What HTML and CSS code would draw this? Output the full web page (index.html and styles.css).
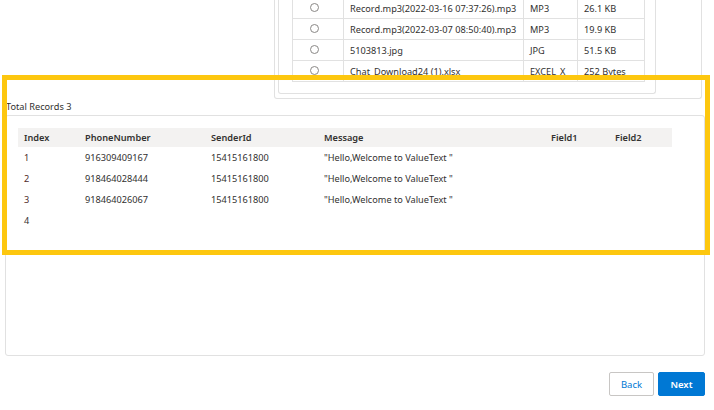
FILE: index.html
```html
<!DOCTYPE html>
<html lang="en">

<head>
    <meta charset="UTF-8">
    <meta name="viewport" content="width=device-width, initial-scale=1.0">
    <title>Upload Records</title>
    <link rel="stylesheet" href="styles.css">
</head>

<body>
    <div class="page">
        <div class="files-row">
            <div class="files-outer">
                <div class="files-inner">
                    <table class="files">
                        <colgroup>
                            <col class="f-radio">
                            <col class="f-name">
                            <col class="f-type">
                            <col class="f-size">
                        </colgroup>
                        <tr>
                            <td class="radio-cell"><span class="radio"></span></td>
                            <td>Record.mp3(2022-03-16 07:37:26).mp3</td>
                            <td>MP3</td>
                            <td>26.1 KB</td>
                        </tr>
                        <tr>
                            <td class="radio-cell"><span class="radio"></span></td>
                            <td>Record.mp3(2022-03-07 08:50:40).mp3</td>
                            <td>MP3</td>
                            <td>19.9 KB</td>
                        </tr>
                        <tr>
                            <td class="radio-cell"><span class="radio"></span></td>
                            <td>5103813.jpg</td>
                            <td>JPG</td>
                            <td>51.5 KB</td>
                        </tr>
                        <tr>
                            <td class="radio-cell"><span class="radio"></span></td>
                            <td>Chat_Download24 (1).xlsx</td>
                            <td>EXCEL_X</td>
                            <td>252 Bytes</td>
                        </tr>
                    </table>
                </div>
            </div>
        </div>

        <div class="total">Total Records 3</div>

        <div class="card">
            <table class="records">
                <thead>
                    <tr>
                        <th class="c-index">Index</th>
                        <th class="c-phone">PhoneNumber</th>
                        <th class="c-sender">SenderId</th>
                        <th class="c-msg">Message</th>
                        <th class="c-f1">Field1</th>
                        <th class="c-f2">Field2</th>
                    </tr>
                </thead>
                <tbody>
                    <tr>
                        <td class="idx">1</td>
                        <td>916309409167</td>
                        <td>15415161800</td>
                        <td>"Hello,Welcome to ValueText "</td>
                        <td></td>
                        <td></td>
                    </tr>
                    <tr>
                        <td class="idx">2</td>
                        <td>918464028444</td>
                        <td>15415161800</td>
                        <td>"Hello,Welcome to ValueText "</td>
                        <td></td>
                        <td></td>
                    </tr>
                    <tr>
                        <td class="idx">3</td>
                        <td>918464026067</td>
                        <td>15415161800</td>
                        <td>"Hello,Welcome to ValueText "</td>
                        <td></td>
                        <td></td>
                    </tr>
                    <tr>
                        <td>4</td>
                        <td></td>
                        <td></td>
                        <td></td>
                        <td></td>
                        <td></td>
                    </tr>
                </tbody>
            </table>
        </div>

        <div class="actions">
            <button class="btn btn-back">Back</button>
            <button class="btn btn-next">Next</button>
        </div>

        <!-- highlight frame drawn over the records area -->
        <div class="highlight"></div>
    </div>
</body>

</html>
```

FILE: styles.css
```css
* {
    margin: 0;
    padding: 0;
    box-sizing: border-box;
    font-family: 'Noto Sans', 'Open Sans', sans-serif;
}

body {
    background: white;
    color: #323130;
    font-size: 9.2px;
}

.page {
    position: relative;
    width: 714px;
    height: 410px;
    overflow: hidden;
}

/* File list panel (scrolled, top cut off) */

.files-row {
    display: flex;
    justify-content: flex-end;
    padding-right: 12px;
}

.files-outer {
    width: 428px;
    border: 1px solid #e1e1e1;
    border-top: none;
    border-radius: 0 0 3px 3px;
    padding: 0 45px 4px 3px;
}

.files-inner {
    border: 1px solid #e1e1e1;
    border-top: none;
    border-radius: 0 0 3px 3px;
    padding: 0 12px 11px 13px;
}

.files {
    width: 352px;
    border-collapse: collapse;
    table-layout: fixed;
    margin-top: -3px;
}

.f-radio { width: 51px; }
.f-name { width: 180px; }
.f-type { width: 54px; }
.f-size { width: 67px; }

.files td {
    border: 1px solid #e1e1e1;
    height: 21px;
    padding: 0 6px;
    white-space: nowrap;
    overflow: hidden;
}

.files .radio-cell {
    padding-left: 17px;
}

.radio {
    display: inline-block;
    width: 9px;
    height: 9px;
    border: 1px solid #8a8886;
    border-radius: 50%;
    vertical-align: middle;
    margin-top: -3px;
}

/* Records */

.total {
    padding: 1px 0 0 6px;
    height: 16px;
    line-height: 14px;
}

.card {
    margin: 0 9px 0 5px;
    height: 241px;
    border: 1px solid #e1e1e1;
    border-radius: 3px;
    padding: 12px 0 0 12px;
}

.records {
    width: 654px;
    border-collapse: collapse;
    table-layout: fixed;
}

.records th {
    background: #f3f2f1;
    height: 19px;
    text-align: left;
    font-weight: 600;
    padding: 0 6px;
    color: #323130;
}

.records td {
    height: 21px;
    padding: 0 6px;
    white-space: nowrap;
}

.records .idx {
    color: #4e2b2a;
}

.c-index { width: 61px; }
.c-phone { width: 126px; }
.c-sender { width: 113px; }
.c-msg { width: 227px; }
.c-f1 { width: 64px; }
.c-f2 { width: 63px; }

/* Buttons */

.actions {
    display: flex;
    justify-content: flex-end;
    gap: 4px;
    padding: 16px 9px 0 0;
}

.btn {
    height: 24px;
    border-radius: 2px;
    font-size: 9.5px;
    cursor: pointer;
}

.btn-back {
    width: 45px;
    background: white;
    border: 1px solid #c8c6c4;
    color: #0078d4;
}

.btn-next {
    width: 47px;
    background: #0078d4;
    border: 1px solid #0078d4;
    color: white;
    font-weight: 600;
}

.highlight {
    position: absolute;
    left: 2px;
    top: 75px;
    width: 708px;
    height: 180px;
    border: 5px solid #fdc70f;
    pointer-events: none;
}
```
